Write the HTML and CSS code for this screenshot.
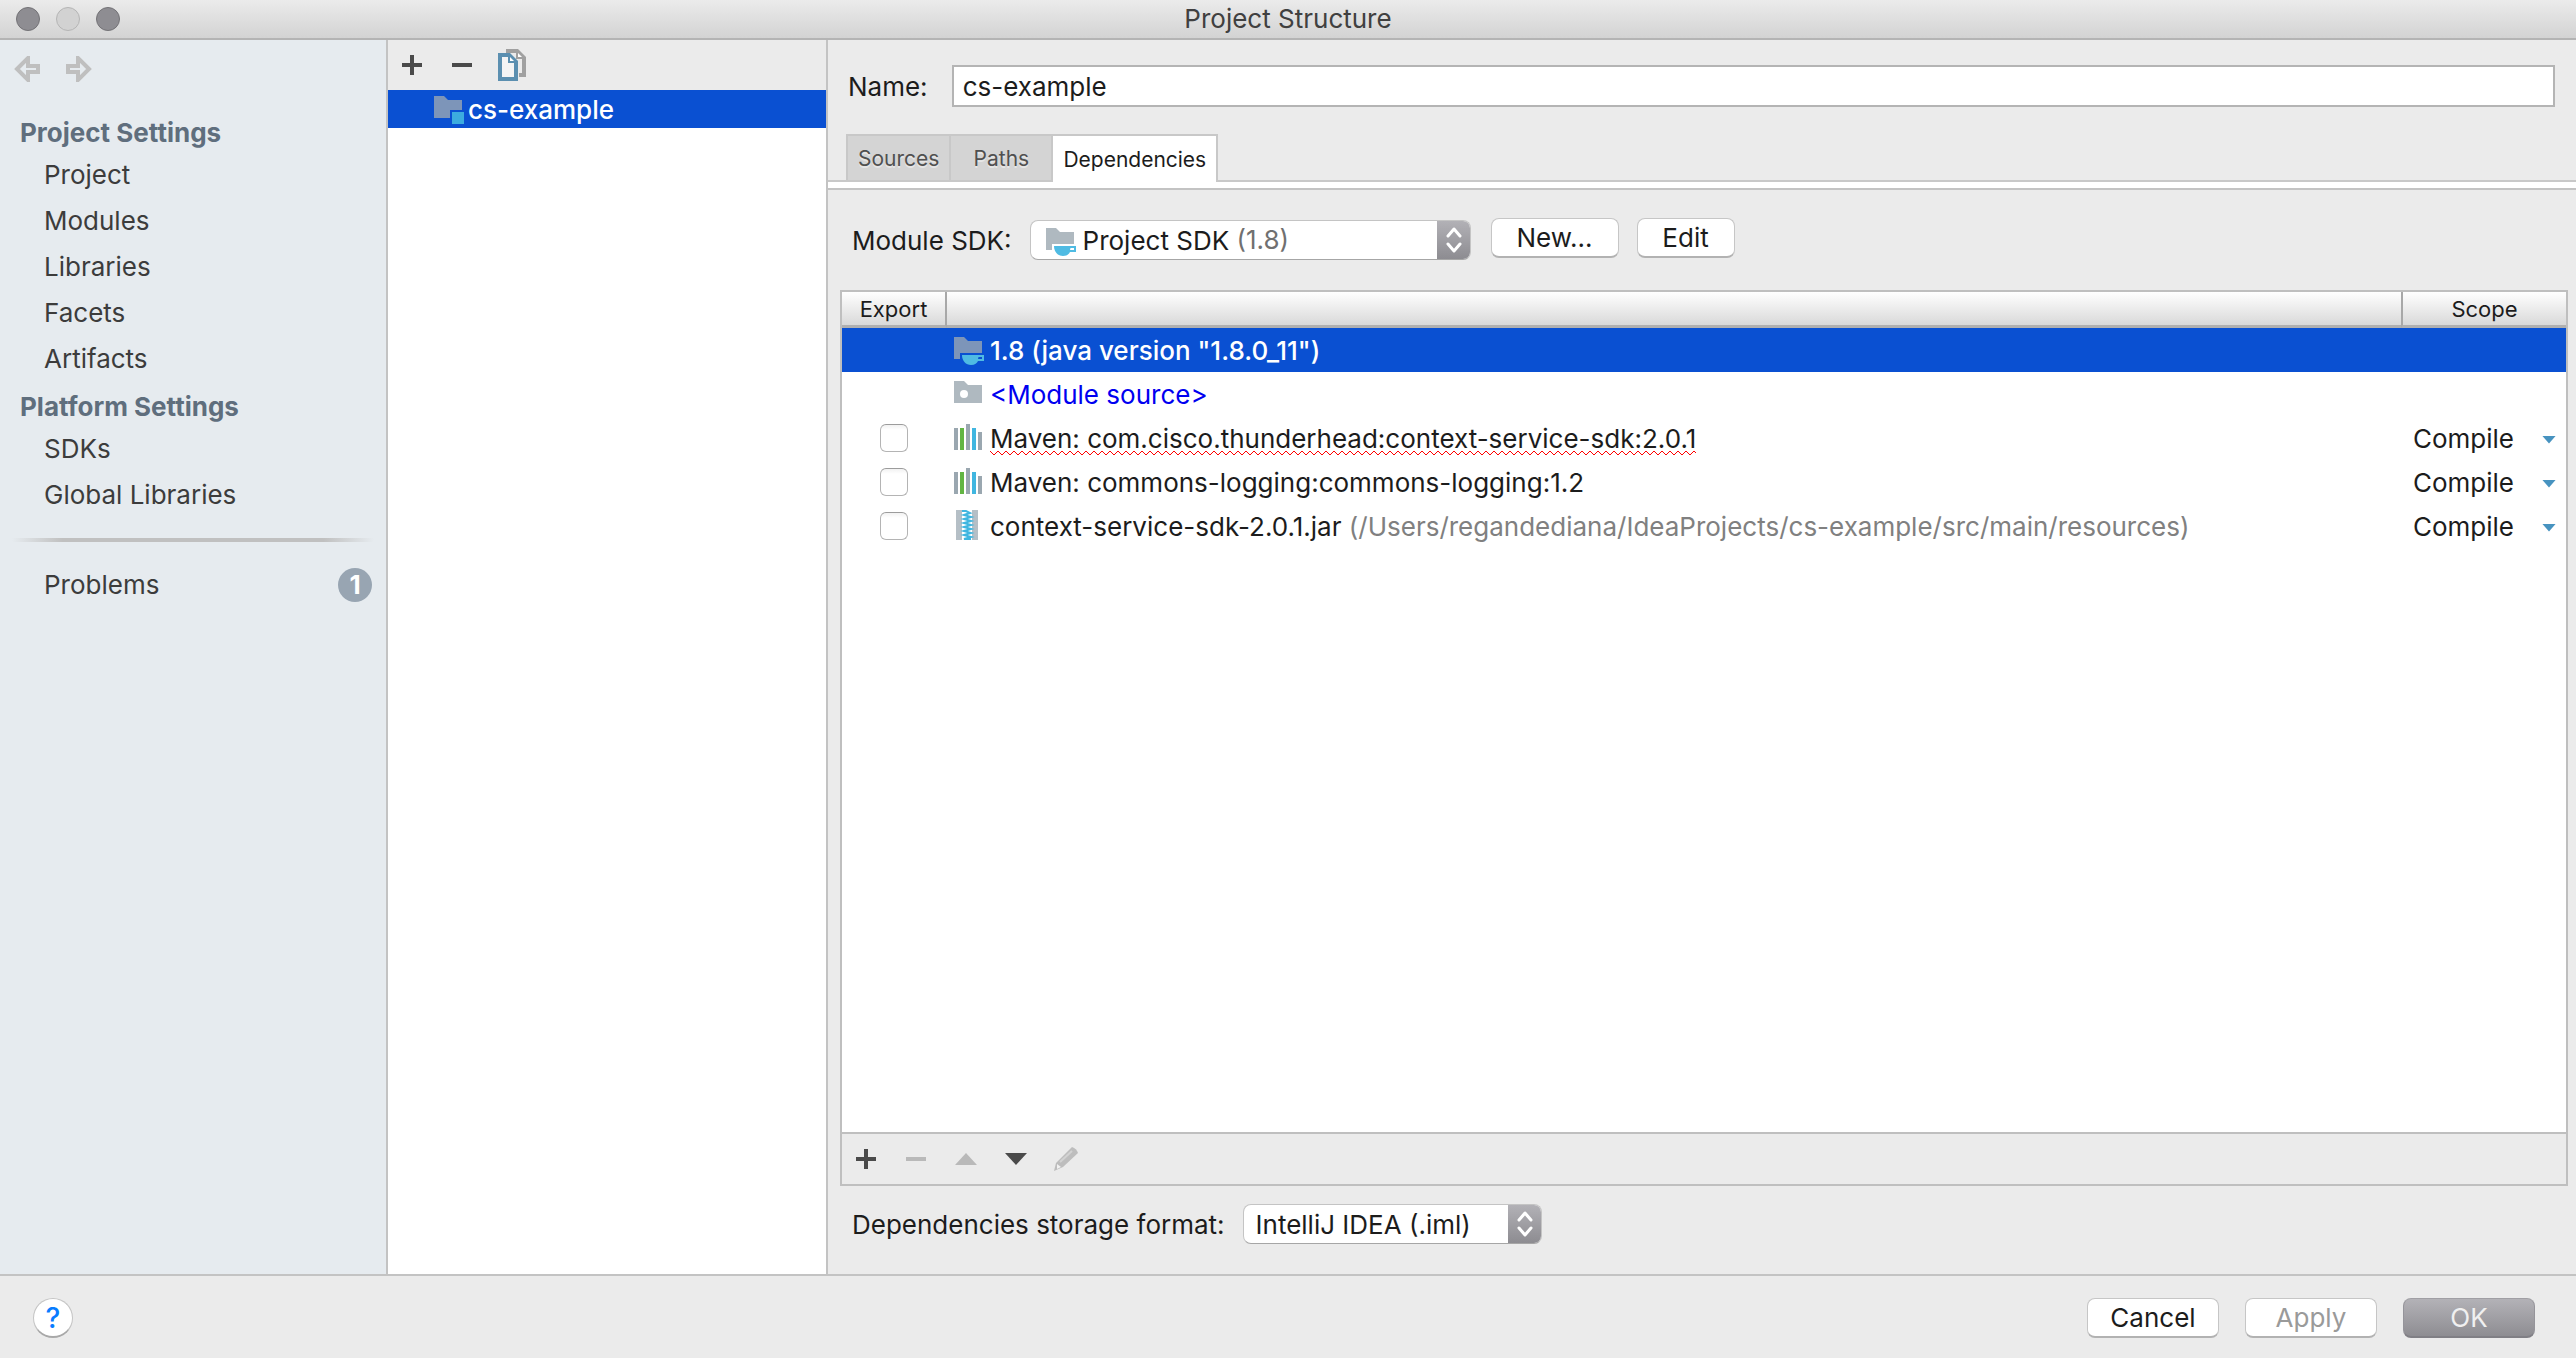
FILE: index.html
```html
<!DOCTYPE html>
<html lang="en">
<head>
<meta charset="utf-8">
<title>Project Structure</title>
<link rel="stylesheet" href="styles.css">
</head>
<body>
<svg class="defs" aria-hidden="true">
  <defs>
    <symbol id="folder" viewBox="0 0 30 30"><path d="M0 2h10l4 4h14v18H0z"/></symbol>
    <symbol id="plus" viewBox="0 0 20 20"><path d="M8 0h4v8h8v4h-8v8H8v-8H0V8h8z"/></symbol>
    <symbol id="minus" viewBox="0 0 20 20"><path d="M0 8h20v4H0z"/></symbol>
    <symbol id="cup" viewBox="0 0 30 30">
      <path class="folder-fill" d="M0 2h10l4 4h14v12H6v6H0z"/>
      <path class="cup-fill" d="M8 20h22v6h-6c-1 2-3 4-7 4-5 0-9-4-9-10z"/>
      <path class="cup-hole" d="M24.500 22h3.500v2h-4z"/>
    </symbol>
    <symbol id="library" viewBox="0 0 28 28">
      <path fill="#9aa7b0" d="M0 4h4v22H0zM12 0h4v26h-4zM24 8h4v18h-4z"/>
      <path fill="#62b543" d="M6 4h4v22H6z"/>
      <path fill="#40b6e0" d="M18 4h4v22h-4z"/>
    </symbol>
    <symbol id="updown" viewBox="0 0 16 26">
      <path d="M2 9l6-7 6 7M2 17l6 7 6-7" fill="none" stroke="#fff" stroke-width="3" stroke-linecap="round" stroke-linejoin="round"/>
    </symbol>
  </defs>
</svg>
<div class="window">
  <header class="titlebar">
    <div class="lights"><span class="light"></span><span class="light light-off"></span><span class="light"></span></div>
    <h1 class="title">Project Structure</h1>
  </header>

  <div class="columns">
    <nav class="sidebar">
      <div class="history">
        <button class="icon-button" aria-label="Back"><svg width="26" height="26" viewBox="0 0 26 26"><path d="M3 13L14 2v8h10v6H14v8z" fill="none" stroke="#bfbfbf" stroke-width="4"/></svg></button>
        <button class="icon-button" aria-label="Forward"><svg width="26" height="26" viewBox="0 0 26 26"><path d="M23 13L12 2v8H2v6h10v8z" fill="none" stroke="#bfbfbf" stroke-width="4"/></svg></button>
      </div>
      <h2 class="group">Project Settings</h2>
      <a class="item" href="#project">Project</a>
      <a class="item" href="#modules">Modules</a>
      <a class="item" href="#libraries">Libraries</a>
      <a class="item" href="#facets">Facets</a>
      <a class="item" href="#artifacts">Artifacts</a>
      <h2 class="group">Platform Settings</h2>
      <a class="item" href="#sdks">SDKs</a>
      <a class="item" href="#global">Global Libraries</a>
      <hr class="divider">
      <a class="item item-problems" href="#problems">Problems <span class="badge">1</span></a>
    </nav>

    <section class="modules" aria-label="Modules">
      <div class="toolbar">
        <button class="icon-button" aria-label="Add"><svg class="tool" width="20" height="20"><use href="#plus"/></svg></button>
        <button class="icon-button" aria-label="Remove"><svg class="tool" width="20" height="20"><use href="#minus"/></svg></button>
        <button class="icon-button" aria-label="Copy"><svg width="28" height="32" viewBox="0 0 28 32">
          <path d="M8 0h12l8 8v20h-7v-4h3V10h-6V4H8z" fill="#a0a0a0"/><path d="M20 4v4h4z" fill="#fff"/>
          <path d="M0 4h12l8 8v20H0z" fill="#5b8fb0"/><path d="M4 8h6v6h6v14H4z" fill="#f4f4f4"/><path d="M12 8v4h4z" fill="#fff"/>
        </svg></button>
      </div>
      <a class="module" href="#cs-example" aria-current="true">
        <svg width="30" height="30" viewBox="0 0 30 30"><path d="M0 2h10l4 4h14v10H16v8H0z" fill="#7d95b9"/><path d="M18 18h12v12H18z" fill="#3cacdf"/></svg>cs-example</a>
    </section>

    <main class="editor">
      <div class="name-row">
        <label for="name">Name:</label>
        <input class="text-field" id="name" type="text" value="cs-example">
      </div>
      <div class="tabs" role="tablist">
        <button class="tab" role="tab">Sources</button>
        <button class="tab" role="tab">Paths</button>
        <button class="tab tab-active" role="tab" aria-selected="true">Dependencies</button>
      </div>
      <div class="strip"></div>

      <div class="sdk-row">
        <label for="sdk">Module SDK:</label>
        <div class="combo combo-sdk">
          <select id="sdk"><option>Project SDK</option></select>
          <svg class="combo-icon" width="30" height="30"><use href="#cup"/></svg>
          <span class="combo-note">(1.8)</span>
          <span class="stepper"><svg width="16" height="26"><use href="#updown"/></svg></span>
        </div>
        <div class="sdk-actions">
          <button class="button button-new">New...</button>
          <button class="button button-edit">Edit</button>
        </div>
      </div>

      <div class="panel">
        <div class="table-area">
          <table class="deps">
            <thead>
              <tr><th class="col-export">Export</th><th></th><th class="col-scope">Scope</th></tr>
            </thead>
            <tbody>
              <tr class="selected">
                <td></td>
                <td><div class="entry"><svg class="on-blue" width="30" height="30"><use href="#cup"/></svg><span>1.8 (java version "1.8.0_11")</span></div></td>
                <td></td>
              </tr>
              <tr>
                <td></td>
                <td><div class="entry entry-source"><svg width="30" height="30"><use href="#folder" fill="#afb9c0"/><circle cx="10" cy="15" r="4" fill="#fff"/></svg><span>&lt;Module source&gt;</span></div></td>
                <td></td>
              </tr>
              <tr>
                <td><input class="check" type="checkbox" aria-label="Export context-service-sdk"></td>
                <td><div class="entry"><svg width="30" height="28"><use href="#library" width="28" height="28"/></svg><span class="error">Maven: com.cisco.thunderhead:context-service-sdk:2.0.1<svg class="squiggle" width="100%" height="6" aria-hidden="true"><defs><pattern id="zigzag" width="8" height="6" patternUnits="userSpaceOnUse"><path d="M-1 0l5 5 5-5" fill="none" stroke="#f00"/></pattern></defs><rect width="100%" height="6" fill="url(#zigzag)"/></svg></span></div></td>
                <td><div class="scope"><select aria-label="Scope"><option>Compile</option></select></div></td>
              </tr>
              <tr>
                <td><input class="check" type="checkbox" aria-label="Export commons-logging"></td>
                <td><div class="entry"><svg width="30" height="28"><use href="#library" width="28" height="28"/></svg><span>Maven: commons-logging:commons-logging:1.2</span></div></td>
                <td><div class="scope"><select aria-label="Scope"><option>Compile</option></select></div></td>
              </tr>
              <tr>
                <td><input class="check" type="checkbox" aria-label="Export context-service-sdk-2.0.1.jar"></td>
                <td><div class="entry"><svg width="30" height="32" viewBox="0 0 30 32"><path d="M2 0h6v30H2zM18 0h6v30h-6z" fill="#b5bfc6"/><path d="M8 1h4l4 2-6 2 7 2-7 2 7 2-7 2 7 2-7 2 7 2-7 2 7 2-7 2 7 2-7 2h7" fill="none" stroke="#40b6e0" stroke-width="2"/></svg><span>context-service-sdk-2.0.1.jar <span class="path">(/Users/regandediana/IdeaProjects/cs-example/src/main/resources)</span></span></div></td>
                <td><div class="scope"><select aria-label="Scope"><option>Compile</option></select></div></td>
              </tr>
            </tbody>
          </table>
        </div>
        <div class="panel-tools">
          <button class="icon-button" aria-label="Add"><svg class="tool" width="20" height="20"><use href="#plus"/></svg></button>
          <button class="icon-button" aria-label="Remove" disabled><svg class="tool" width="20" height="20"><use href="#minus"/></svg></button>
          <button class="icon-button" aria-label="Move up" disabled><svg class="tool" width="22" height="12"><path d="M11 0l11 12H0z"/></svg></button>
          <button class="icon-button" aria-label="Move down"><svg class="tool" width="22" height="12"><path d="M11 12L0 0h22z"/></svg></button>
          <button class="icon-button" aria-label="Edit" disabled><svg width="24" height="24" viewBox="0 0 24 24"><path d="M18 0c3 1 5 3 6 6L9 20l-9 4 2-8z" fill="#bdbdbd"/><path d="M3 17l4 3-4 2z" fill="#f2f2f2"/><path d="M18 4L6 15" stroke="#d2d2d2" stroke-width="2"/></svg></button>
        </div>
      </div>

      <div class="storage-row">
        <label for="storage">Dependencies storage format:</label>
        <div class="combo combo-storage">
          <select id="storage"><option>IntelliJ IDEA (.iml)</option></select>
          <span class="stepper"><svg width="16" height="26"><use href="#updown"/></svg></span>
        </div>
      </div>
    </main>
  </div>

  <footer class="footer">
    <button class="help" aria-label="Help">?</button>
    <div class="actions">
      <button class="button">Cancel</button>
      <button class="button" disabled>Apply</button>
      <button class="button button-primary">OK</button>
    </div>
  </footer>
</div>
</body>
</html>
```
FILE: styles.css
```css
* { box-sizing: border-box; }

body {
  margin: 0;
  font-family: Inter, "Liberation Sans", sans-serif;
  font-size: 26px;
  color: #1c1c1c;
  background: #ebebeb;
}

button, input, select { font: inherit; color: inherit; margin: 0; }
button { cursor: default; }
svg { display: block; flex: none; }
.defs { position: absolute; width: 0; height: 0; }

.window { display: flex; flex-direction: column; min-height: 100vh; }

/* Title bar */
.titlebar {
  display: grid;
  grid-template-columns: 1fr auto 1fr;
  align-items: center;
  height: 40px;
  padding: 0 16px;
  border-bottom: 2px solid #b4b4b4;
  background: linear-gradient(#ebebeb, #d3d3d3);
}
.lights { display: flex; gap: 16px; }
.light {
  width: 24px;
  height: 24px;
  border: 1px solid #737276;
  border-radius: 50%;
  background: #8e8d92;
}
.light-off { border-color: #b5b5b5; background: #d2d2d2; }
.title { margin: 0; font-size: 26px; font-weight: 400; line-height: 36px; color: #404040; }

.columns { display: flex; flex: 1; }

.icon-button { display: flex; padding: 0; border: 0; background: none; }
.tool { fill: #4a4a4a; }
.icon-button:disabled .tool { fill: #b9b9b9; }

/* Sidebar */
.sidebar {
  flex: none;
  width: 388px;
  border-right: 2px solid #c3c3c3;
  background: #e6ebef;
}
.history { display: flex; gap: 26px; height: 68px; padding: 16px 14px; }
.group {
  margin: 0;
  padding: 6px 20px 0;
  font-size: 26px;
  font-weight: 700;
  line-height: 38px;
  color: #5f6e7d;
}
.item {
  display: flex;
  align-items: center;
  justify-content: space-between;
  padding: 0 14px 0 44px;
  line-height: 46px;
  color: #3c3c3c;
  text-decoration: none;
}
.divider {
  height: 4px;
  margin: 20px 12px;
  border: 0;
  background: linear-gradient(90deg, transparent, #c0c0c0 14%, #c0c0c0 86%, transparent);
}
.badge {
  width: 34px;
  border-radius: 50%;
  background: #98a5b2;
  color: #fff;
  font-weight: 700;
  line-height: 34px;
  text-align: center;
}

/* Module list */
.modules { flex: none; width: 440px; border-right: 2px solid #c3c3c3; background: #fff; }
.toolbar {
  display: flex;
  align-items: center;
  gap: 30px;
  height: 50px;
  padding: 0 14px;
  background: #ebebeb;
}
.toolbar .icon-button:last-child { margin-left: -4px; }
.module {
  display: flex;
  align-items: center;
  gap: 4px;
  height: 38px;
  padding-left: 46px;
  background: #0a50d2;
  color: #fff;
  font-weight: 500;
  text-decoration: none;
}

/* Editor */
.editor { display: flex; flex: 1; flex-direction: column; min-width: 0; }
.name-row { display: flex; align-items: center; gap: 24px; padding: 25px 21px 0 20px; }
.text-field {
  flex: 1;
  height: 42px;
  padding: 0 9px;
  border: 2px solid #b4b4b4;
  background: #fff;
  outline: 0;
}
.tabs { display: flex; margin-top: 27px; padding-left: 18px; border-bottom: 2px solid #c8c8c8; }
.tab {
  min-width: 102px;
  height: 46px;
  padding: 0 10px;
  border: 2px solid #c8c8c8;
  border-width: 2px 0 0 2px;
  background: #d4d4d4;
  color: #505050;
  font-size: 21px;
  text-shadow: 0 2px #e6e6e6;
}
.tab-active {
  height: 48px;
  margin-bottom: -2px;
  border-right-width: 2px;
  background: #fff;
  color: #1c1c1c;
  text-shadow: none;
}
.strip { height: 8px; border-bottom: 2px solid #c3c3c3; background: #fff; }

.sdk-row { display: flex; align-items: center; padding: 28px 24px; }
.sdk-actions { display: flex; gap: 18px; padding-bottom: 4px; margin-left: 20px; }
.combo {
  position: relative;
  display: flex;
  height: 40px;
  border: 1px solid #c4c4c4;
  border-bottom-color: #a6a6a6;
  border-radius: 8px;
  background: #fff;
  overflow: hidden;
}
.combo select { flex: 1; padding: 0 12px; border: 0; background: none; appearance: none; }
.combo-sdk { width: 441px; margin-left: 18px; }
.combo-sdk select { padding-left: 52px; }
.combo-icon { position: absolute; left: 15px; top: 5px; }
.combo-note { position: absolute; left: 206px; top: 0; line-height: 38px; color: #707070; }
.stepper {
  position: absolute;
  right: -1px;
  top: -1px;
  display: grid;
  place-items: center;
  width: 34px;
  height: 40px;
  background: linear-gradient(#b3b2b7, #8c8b90);
  pointer-events: none;
}

.button {
  width: 132px;
  height: 40px;
  padding: 0;
  border: 1px solid #c6c6c6;
  border-bottom: 2px solid #b2b2b2;
  border-radius: 8px;
  background: #fff;
}
.button:disabled { color: #9a9a9a; }
.button-new { width: 128px; }
.button-edit { width: 98px; }
.button-primary {
  border-color: #a09fa4 #95949a #807f85;
  background: linear-gradient(#b3b2b7, #8e8d92);
  color: #f0f0f0;
}

/* Dependencies table */
.panel {
  display: flex;
  flex: 1;
  flex-direction: column;
  margin: 0 8px 0 12px;
  border: 2px solid #bfbfbf;
}
.table-area { flex: 1; background: #fff; }
.deps { width: 100%; border-collapse: separate; border-spacing: 0; table-layout: fixed; }
.deps th {
  height: 36px;
  padding: 0;
  border-bottom: 3px solid #b0b0b0;
  background: linear-gradient(#fff, #d9d9d9);
  font-size: 22px;
  font-weight: 400;
}
.col-export { width: 105px; }
.col-scope { width: 165px; }
.deps .col-export { border-right: 2px solid #a8a8a8; }
.deps .col-scope { border-left: 2px solid #a8a8a8; }
.deps td { height: 44px; padding: 0; }
.check {
  display: block;
  appearance: none;
  width: 28px;
  height: 28px;
  margin: 0 0 0 38px;
  border: 1px solid #b4b4b4;
  border-top-color: #9c9c9c;
  border-radius: 6px;
  background: linear-gradient(#f2f2f2, #fff 5px);
}
.entry { display: flex; align-items: center; gap: 6px; padding-left: 7px; white-space: nowrap; }
.entry-source { color: #0000f0; }
.selected { background: #0a50d2; color: #fff; font-weight: 500; }
.folder-fill { fill: var(--folder, #afb9c0); }
.cup-fill { fill: #4fbbe3; }
.cup-hole { fill: var(--hole, #fff); }
.on-blue { --folder: #7d95b9; --hole: #0a50d2; }
.error { position: relative; }
.squiggle { position: absolute; left: 0; bottom: -2px; }
.path { color: #808080; }
.scope { position: relative; }
.scope select { display: block; width: 100%; padding: 0 0 0 12px; border: 0; background: none; appearance: none; }
.scope::after {
  content: "";
  position: absolute;
  right: 10px;
  top: 13px;
  width: 14px;
  height: 8px;
  background: #4793c0;
  clip-path: polygon(0 0, 100% 0, 50% 100%);
  pointer-events: none;
}
.panel-tools {
  display: flex;
  align-items: center;
  gap: 28px;
  height: 52px;
  padding: 0 13px;
  border-top: 2px solid #bfbfbf;
}
.panel-tools .icon-button { justify-content: center; width: 22px; }

.storage-row { display: flex; align-items: center; padding: 18px 24px 30px; }
.combo-storage { width: 299px; margin-left: 18px; }

/* Footer */
.footer {
  display: flex;
  align-items: center;
  justify-content: space-between;
  height: 84px;
  padding: 2px 41px 0 33px;
  border-top: 2px solid #c3c3c3;
}
.actions { display: flex; gap: 26px; }
.help {
  width: 40px;
  height: 40px;
  padding: 0;
  border: 1px solid #c4c4c4;
  border-bottom: 2px solid #a8a8a8;
  border-radius: 50%;
  background: #fff;
  color: #087cff;
  font-size: 28px;
  font-weight: 500;
}
```
